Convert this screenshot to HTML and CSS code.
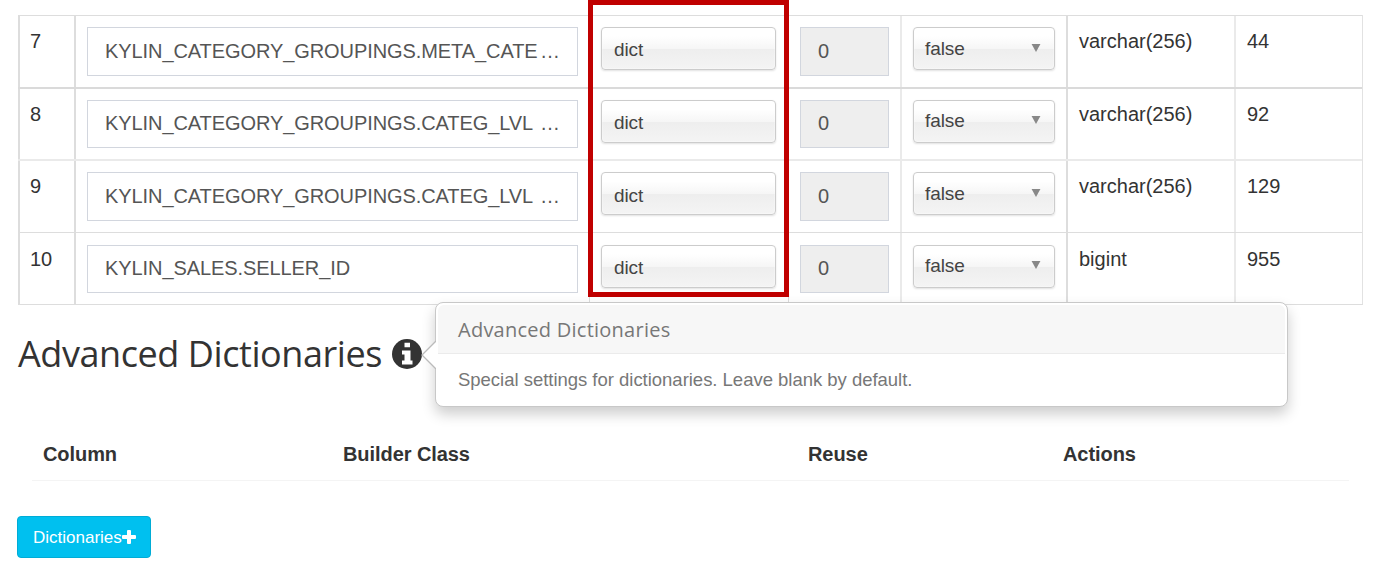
FILE: index.html
```
<!DOCTYPE html>
<html lang="en">
<head>
<meta charset="utf-8">
<title>Advanced Dictionaries</title>
<link rel="stylesheet" href="styles.css">
</head>
<body>
<main class="page">
  <section class="rowkeys">
    <div class="row first">
      <div class="cell heavy">7</div>
      <div class="cell heavy"><div class="field"><span>KYLIN_CATEGORY_GROUPINGS.META_CATE</span><span>…</span></div></div>
      <div class="cell"><div class="select">dict</div></div>
      <div class="cell"><div class="field off">0</div></div>
      <div class="cell faint"><div class="select pick"><span>false</span><svg class="caret" viewBox="0 0 10 9"><path d="M0 0h10L5 9z"/></svg></div></div>
      <div class="cell heavy">varchar(256)</div>
      <div class="cell faint">44</div>
    </div>
    <div class="row second">
      <div class="cell heavy">8</div>
      <div class="cell heavy"><div class="field low"><span>KYLIN_CATEGORY_GROUPINGS.CATEG_LVL</span><span>…</span></div></div>
      <div class="cell"><div class="select">dict</div></div>
      <div class="cell"><div class="field off low">0</div></div>
      <div class="cell faint"><div class="select pick up"><span>false</span><svg class="caret" viewBox="0 0 10 9"><path d="M0 0h10L5 9z"/></svg></div></div>
      <div class="cell heavy">varchar(256)</div>
      <div class="cell faint">92</div>
    </div>
    <div class="row third">
      <div class="cell heavy">9</div>
      <div class="cell heavy"><div class="field"><span>KYLIN_CATEGORY_GROUPINGS.CATEG_LVL</span><span>…</span></div></div>
      <div class="cell"><div class="select down">dict</div></div>
      <div class="cell"><div class="field off">0</div></div>
      <div class="cell faint"><div class="select pick"><span>false</span><svg class="caret" viewBox="0 0 10 9"><path d="M0 0h10L5 9z"/></svg></div></div>
      <div class="cell heavy">varchar(256)</div>
      <div class="cell faint">129</div>
    </div>
    <div class="row last">
      <div class="cell heavy">10</div>
      <div class="cell heavy"><div class="field low"><span>KYLIN_SALES.SELLER_ID</span></div></div>
      <div class="cell"><div class="select">dict</div></div>
      <div class="cell"><div class="field off low">0</div></div>
      <div class="cell faint"><div class="select pick up"><span>false</span><svg class="caret" viewBox="0 0 10 9"><path d="M0 0h10L5 9z"/></svg></div></div>
      <div class="cell heavy">bigint</div>
      <div class="cell faint">955</div>
    </div>
  </section>

  <div class="heading">
    <h3 class="title">Advanced Dictionaries</h3>
    <svg class="info" viewBox="0 0 30 30"><circle cx="15" cy="15" r="15"/><path class="mark" d="M12.500 3.800h5.500v4.400h-5.500zM10 11.500h8.500v10H20.500V25.500H10v-4h2.500v-6H10z"/></svg>
  </div>

  <div class="dict-head">
    <span>Column</span><span>Builder Class</span><span>Reuse</span><span>Actions</span>
  </div>

  <button class="add" type="button">Dictionaries<svg class="plus" viewBox="0 0 14 14"><path d="M5 1q0-1 1-1h2q1 0 1 1v4h4q1 0 1 1v2q0 1-1 1H9v4q0 1-1 1H6q-1 0-1-1V9H1Q0 9 0 8V6q0-1 1-1h4z"/></svg></button>

  <div class="highlight"></div>
  <aside class="popover">
    <svg class="arrow" viewBox="0 0 15 30"><path d="M15 1L1 15l14 14"/></svg>
    <h4 class="pop-title">Advanced Dictionaries</h4>
    <p class="pop-text">Special settings for dictionaries. Leave blank by default.</p>
  </aside>
</main>
</body>
</html>
```
FILE: styles.css
```
* { box-sizing: border-box; }
body {
  margin: 0;
  background: #fff;
  color: #333;
  font: 20px/28px "Liberation Sans", Arial, sans-serif;
}
.page {
  position: relative;
  width: 1378px;
  height: 575px;
  padding: 15px 15px 0 18px;
  overflow: hidden;
}
.rowkeys {
  width: 1345px;
  border-right: 1px solid #e2e2e2;
  border-bottom: 1px solid #ddd;
}
.row {
  display: grid;
  grid-template-columns: 56px 515px 199px 112px 166px 168px 128px;
  height: 72px;
  border-top: 1px solid #ddd;
}
.second { border-top: 2px solid #dadada; }
.third { height: 73px; border-top: 2px solid #eaeaea; }
.cell {
  padding: 11px 11px 0;
  border-left: 1px solid #ddd;
  white-space: nowrap;
}
.last .cell { padding-top: 12px; }
.heavy { border-left: 2px solid #ddd; padding-left: 10px; }
.heavy:nth-child(2), .faint, .heavy:nth-child(6) { padding-left: 11px; }
.faint { border-left: 2px solid #eaeaea; }
.field {
  display: flex;
  justify-content: space-between;
  height: 49px;
  padding: 0 17px;
  border: 1px solid #d2d6de;
  color: #555;
  letter-spacing: -.08px;
  line-height: 47px;
}
.low { height: 48px; line-height: 45px; }
.third .field { line-height: 46px; }
.last .field { line-height: 44px; }
.off { background: #eee; }
.select {
  height: 43px;
  margin-right: 1px;
  padding: 0 12px;
  border: 1px solid #ccc;
  border-radius: 4px;
  background: linear-gradient(#fff 20%, #f6f6f6 50%, #eee 52%, #f4f4f4 100%);
  box-shadow: 0 1px 2px rgba(0, 0, 0, .12), inset 0 0 2px #fff;
  color: #444;
  font-size: 19px;
  letter-spacing: -.1px;
  line-height: 44px;
}
.down { line-height: 46px; }
.pick {
  display: flex;
  justify-content: space-between;
  margin-right: 0;
  padding-left: 11px;
  line-height: 42px;
}
.up { line-height: 40px; }
.caret { width: 10px; height: 8px; margin: 16px 1px 0 0; fill: #888; }
.up .caret { margin-top: 15px; }
.heading {
  display: flex;
  align-items: center;
  gap: 10px;
  height: 98px;
}
.title {
  width: 364px;
  margin: 0;
  font: 400 36px/44px "Open Sans", "Noto Sans", sans-serif;
  letter-spacing: -.43px;
  white-space: nowrap;
}
.info { width: 30px; height: 30px; fill: #333; }
.mark { fill: #fff; }
.dict-head {
  display: grid;
  grid-template-columns: 300px 465px 255px 1fr;
  width: 1317px;
  height: 53px;
  margin: 25px 0 0 14px;
  padding: 12px 11px 0;
  border-bottom: 1px solid #f4f4f4;
  font-weight: 700;
  letter-spacing: -.07px;
}
.add {
  display: flex;
  align-items: center;
  width: 134px;
  height: 42px;
  margin: 35px 0 0 -1px;
  padding: 1px 15px 0;
  border: 1px solid #00acd6;
  border-radius: 4px;
  background: #00c0ef;
  color: #fff;
  font: 17px/24px "Liberation Sans", Arial, sans-serif;
}
.plus { flex: none; width: 14px; height: 14px; margin-top: -2px; fill: #fff; }
.highlight {
  position: absolute;
  top: 0;
  left: 588px;
  width: 201px;
  height: 297px;
  border: 5px solid #c00000;
}
.popover {
  position: absolute;
  top: 302px;
  left: 435px;
  width: 853px;
  height: 105px;
  padding: 2px;
  border: 1px solid #c8c8c8;
  border-radius: 8px;
  background: #fff;
  box-shadow: 0 7px 14px rgba(0, 0, 0, .2);
}
.arrow {
  position: absolute;
  top: 37px;
  left: -15px;
  width: 15px;
  height: 30px;
  fill: #fff;
  stroke: #bbb;
  stroke-width: 1.3;
}
.pop-title {
  height: 49px;
  margin: 0;
  padding: 0 20px;
  border-bottom: 1px solid #ebebeb;
  border-radius: 6px 6px 0 0;
  background: #f7f7f7;
  color: #777;
  font: 400 20px/50px "Open Sans", "Noto Sans", sans-serif;
  letter-spacing: .25px;
}
.pop-text {
  margin: 0;
  padding: 12px 20px;
  color: #777;
  font-size: 18.500px;
  letter-spacing: -.02px;
  line-height: 28px;
}
```
